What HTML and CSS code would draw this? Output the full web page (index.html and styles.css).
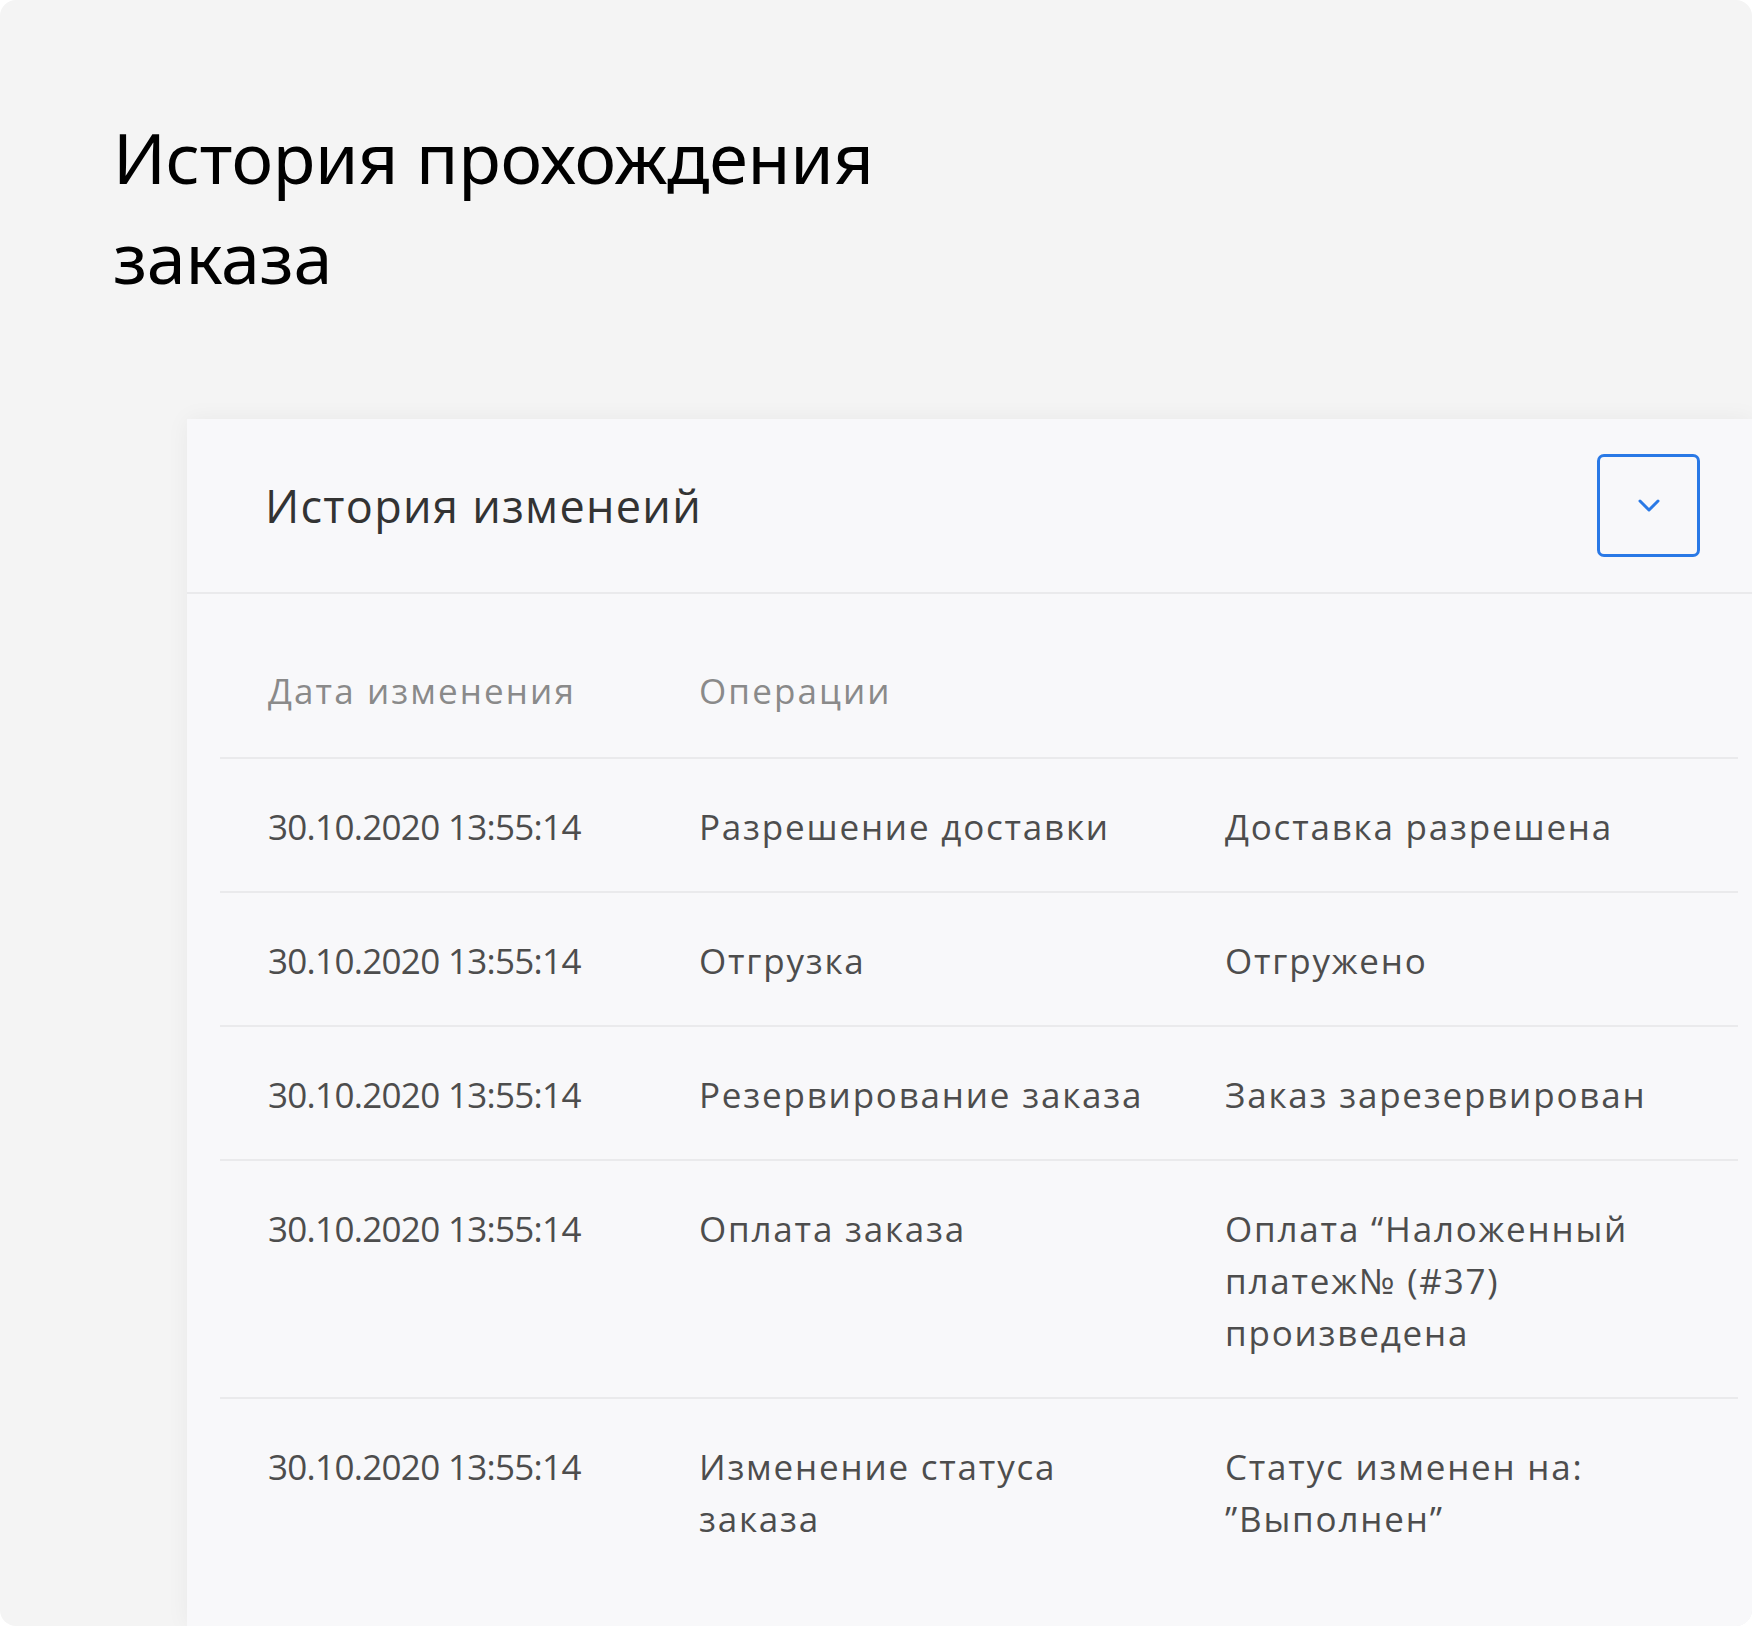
FILE: index.html
```html
<!DOCTYPE html>
<html lang="ru">
<head>
    <meta charset="UTF-8">
    <meta name="viewport" content="width=device-width, initial-scale=1.0">
    <title>История прохождения заказа</title>
    <link rel="stylesheet" href="styles.css">
</head>
<body>
    <div class="frame">
        <h1 class="page-title">История прохождения<br>заказа</h1>

        <div class="card">
            <div class="card-header">
                <h2>История изменеий</h2>
                <button class="toggle" type="button">
                    <svg width="24" height="15" viewBox="0 0 24 15">
                        <path d="M3 3 L12 12 L21 3" fill="none" stroke="#2a79e6" stroke-width="3" stroke-linecap="round" stroke-linejoin="round"/>
                    </svg>
                </button>
            </div>

            <div class="history">
                <div class="row head">
                    <div>Дата изменения</div>
                    <div>Операции</div>
                    <div></div>
                </div>
                <div class="row">
                    <div class="date">30.10.2020 13:55:14</div>
                    <div>Разрешение доставки</div>
                    <div>Доставка разрешена</div>
                </div>
                <div class="row">
                    <div class="date">30.10.2020 13:55:14</div>
                    <div>Отгрузка</div>
                    <div>Отгружено</div>
                </div>
                <div class="row">
                    <div class="date">30.10.2020 13:55:14</div>
                    <div>Резервирование заказа</div>
                    <div>Заказ зарезервирован</div>
                </div>
                <div class="row">
                    <div class="date">30.10.2020 13:55:14</div>
                    <div>Оплата заказа</div>
                    <div>Оплата “Наложенный платеж№ (#37) произведена</div>
                </div>
                <div class="row last">
                    <div class="date">30.10.2020 13:55:14</div>
                    <div>Изменение статуса заказа</div>
                    <div>Статус изменен на: ”Выполнен”</div>
                </div>
            </div>
        </div>
    </div>
</body>
</html>
```

FILE: styles.css
```css
body {
    margin: 0;
    background-color: #ffffff;
    font-family: "Open Sans", "Noto Sans", sans-serif;
}
.frame {
    height: 1626px;
    background-color: #f4f4f4;
    border-radius: 16px;
    overflow: hidden;
    display: flex;
    flex-direction: column;
}
.page-title {
    margin: 0;
    padding: 107px 0 0 113px;
    font-family: "Noto Sans", sans-serif;
    font-size: 70px;
    font-weight: 400;
    line-height: 100px;
    letter-spacing: -0.3px;
    color: #000;
}
.card {
    flex: 1;
    margin: 112px 0 0 187px;
    background-color: #f8f8fa;
    box-shadow: 0 0 22px rgba(0,0,0,0.05);
}
.card-header {
    display: flex;
    justify-content: space-between;
    align-items: center;
    height: 173px;
    padding: 0 52px 0 78px;
    border-bottom: 2px solid #eaeaec;
}
.card-header h2 {
    margin: 0;
    font-size: 45px;
    font-weight: 500;
    letter-spacing: 1.3px;
    color: #333;
}
.toggle {
    width: 103px;
    height: 103px;
    border: 3px solid #2a79e6;
    border-radius: 7px;
    background: transparent;
    display: flex;
    justify-content: center;
    align-items: center;
    padding: 0;
}
.history {
    margin: 0 14px 0 33px;
}
.row {
    display: grid;
    grid-template-columns: 431px 526px 1fr;
    padding: 42px 0 38px 48px;
    border-bottom: 2px solid #eaeaec;
    font-size: 35px;
    line-height: 52px;
    letter-spacing: 1.8px;
    color: #4d4d4d;
}
.row > div {
    padding-right: 56px;
}
.row .date {
    letter-spacing: -0.7px;
}
.row.head {
    padding: 71px 0 40px 48px;
    letter-spacing: 2.1px;
    color: #8a8a8a;
}
.row.last {
    border-bottom: none;
}
```
